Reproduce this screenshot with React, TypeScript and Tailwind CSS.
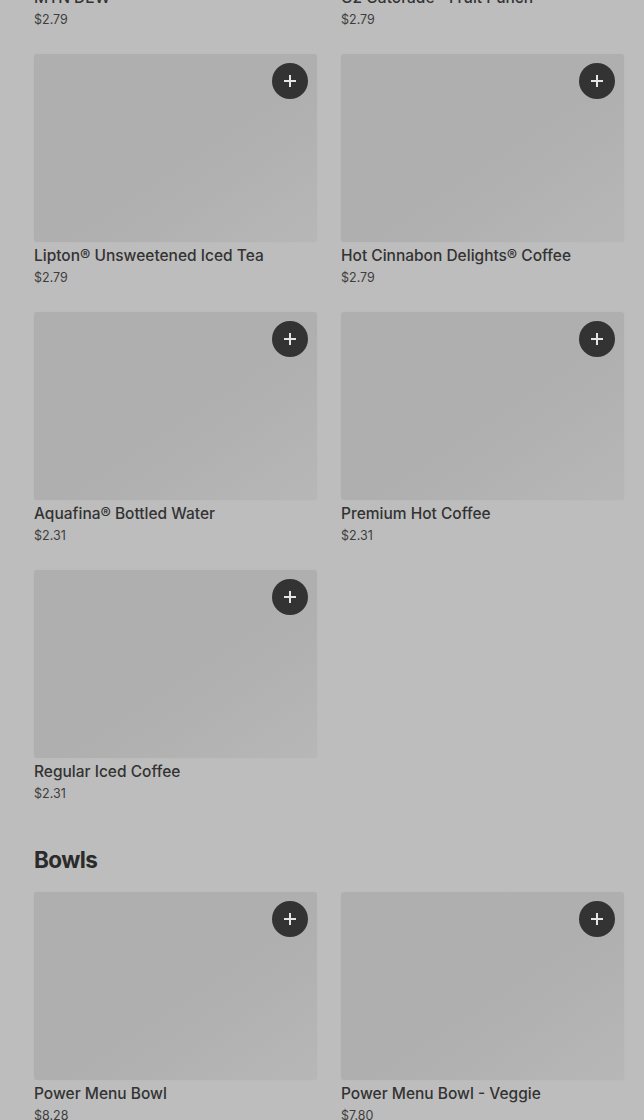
import React from "react";

type Item = { name: string; price: string };

const drinksRows: Item[][] = [
	[
		{ name: "MTN DEW", price: "$2.79" },
		{ name: "G2 Gatorade® Fruit Punch", price: "$2.79" },
	],
	[
		{ name: "Lipton® Unsweetened Iced Tea", price: "$2.79" },
		{ name: "Hot Cinnabon Delights® Coffee", price: "$2.79" },
	],
	[
		{ name: "Aquafina® Bottled Water", price: "$2.31" },
		{ name: "Premium Hot Coffee", price: "$2.31" },
	],
	[{ name: "Regular Iced Coffee", price: "$2.31" }],
];

const bowls: Item[] = [
	{ name: "Power Menu Bowl", price: "$8.28" },
	{ name: "Power Menu Bowl - Veggie", price: "$7.80" },
];

const PlusIcon = () => (
	<svg width="14" height="14" viewBox="0 0 14 14" fill="none">
		<path d="M7 2v10M2 7h10" stroke="#e5e5e5" strokeWidth="2" strokeLinecap="square" />
	</svg>
);

const Card = ({ item }: { item: Item }) => (
	<div className="flex flex-col">
		<div className="relative h-[188px] rounded-[3px] bg-gradient-to-br from-[#afafaf] via-[#afafaf] via-55% to-[#b7b7b7] shadow-[0_0_1px_rgba(0,0,0,0.08)]">
			<button className="absolute top-[9px] right-[9px] flex h-9 w-9 items-center justify-center rounded-full bg-[#333333]">
				<PlusIcon />
			</button>
		</div>
		<p className="mt-[2px] text-[15.5px] leading-6 font-medium text-[#333333]">{item.name}</p>
		<p className="text-[12.5px] leading-5 text-[#3d3d3d]">{item.price}</p>
	</div>
);

export default function App() {
	return (
		<div
			className="min-h-[1120px] overflow-hidden bg-[#bdbdbd] pl-[34px] pr-[20px]"
			style={{ fontFamily: "Inter, 'Noto Sans', sans-serif" }}
		>
			<div className="-mt-[204px] grid grid-cols-2 gap-x-6 gap-y-6">
				{drinksRows.flat().map((item) => (
					<Card key={item.name} item={item} />
				))}
			</div>
			<h2 className="mt-10 text-[22.5px] leading-8 font-bold text-[#2b2b2b] tracking-tight">Bowls</h2>
			<div className="mt-4 grid grid-cols-2 gap-x-6 gap-y-6">
				{bowls.map((item) => (
					<Card key={item.name} item={item} />
				))}
			</div>
		</div>
	);
}
